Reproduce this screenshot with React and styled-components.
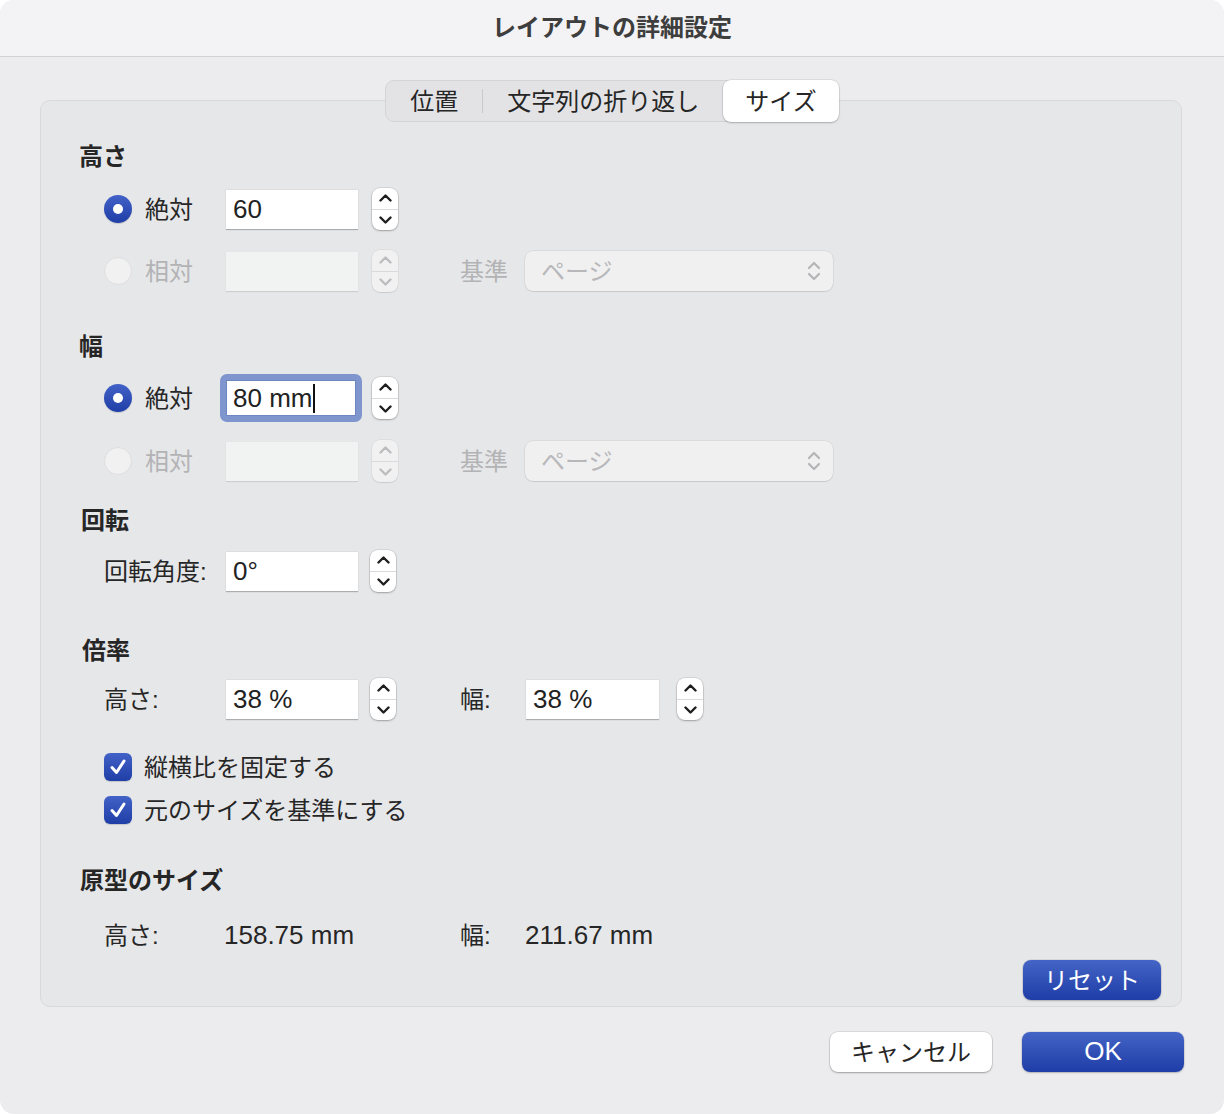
import styled, { createGlobalStyle } from 'styled-components'

const GlobalStyle = createGlobalStyle`
  html, body { margin: 0; padding: 0; background: #fff; }
  body {
    font-family: "Liberation Sans", "Noto Sans CJK JP", sans-serif;
    color: #262626;
    -webkit-font-smoothing: antialiased;
  }
`

const Window = styled.div`
  width: 1224px;
  height: 1114px;
  box-sizing: border-box;
  border-radius: 14px;
  overflow: hidden;
  background: #ececee;
  display: flex;
  flex-direction: column;
`

const TitleBar = styled.div`
  height: 57px;
  flex: none;
  box-sizing: border-box;
  padding-bottom: 6px;
  background: #f3f3f5;
  border-bottom: 1px solid #d2d2d5;
  display: flex;
  align-items: center;
  justify-content: center;
  font-size: 24px;
  font-weight: 700;
  color: #3e3e3e;
`

const Body = styled.div`
  display: flex;
  flex-direction: column;
  padding: 23px 40px 0 40px;
`

const Tabs = styled.div`
  align-self: center;
  position: relative;
  z-index: 1;
  display: flex;
  align-items: center;
  height: 42px;
  box-sizing: border-box;
  margin-bottom: -22px;
  background: #e3e3e5;
  border: 1px solid #d4d4d7;
  border-radius: 9px;
`

const Tab = styled.div`
  height: ${p => (p.$active ? '42px' : '40px')};
  margin-right: ${p => (p.$active ? '-1px' : '0')};
  box-sizing: border-box;
  display: flex;
  align-items: center;
  padding: 0 ${p => (p.$active ? 22 : 24)}px 4px;
  font-size: 24px;
  color: #262626;
  border-radius: 8px;
  background: ${p => (p.$active ? '#fff' : 'transparent')};
  box-shadow: ${p => (p.$active ? '0 0 0 0.5px rgba(0,0,0,0.12), 0 1px 2px rgba(0,0,0,0.22)' : 'none')};
`

const TabDivider = styled.span`
  width: 1px;
  height: 24px;
  background: #c9c9cc;
`

const Panel = styled.div`
  margin-right: 2px;
  background: #e6e7e9;
  border: 1px solid #d9d9dc;
  border-radius: 10px;
  display: flex;
  flex-direction: column;
  padding: 40px 20px 6px 38px;
`

const SectionTitle = styled.div`
  margin-top: ${p => p.$mt || 0}px;
  margin-left: ${p => p.$ml || 0}px;
  font-size: 24px;
  font-weight: 700;
  line-height: 32px;
  color: #262626;
`

const Row = styled.div`
  margin-top: ${p => p.$mt || 0}px;
  margin-left: 25px;
  height: 40px;
  display: flex;
  align-items: center;
`

const Choice = styled.label`
  width: ${p => p.$w || 122}px;
  flex: none;
  display: flex;
  align-items: center;
  gap: 13px;
  font-size: 24px;
  color: ${p => (p.$disabled ? '#b3b3b5' : '#262626')};
`

const ChoiceText = styled.span`
  padding-bottom: 4px;
`

const Label = styled.span`
  width: ${p => p.$w}px;
  margin-left: ${p => p.$ml || 0}px;
  padding-bottom: 4px;
  flex: none;
  font-size: 24px;
  color: ${p => (p.$disabled ? '#b3b3b5' : '#262626')};
`

const Value = styled.span`
  width: ${p => p.$w || 'auto'}px;
  flex: none;
  font-size: 26px;
  color: #262626;
`

const Radio = styled.span`
  width: 28px;
  height: 28px;
  flex: none;
  border-radius: 50%;
  box-sizing: border-box;
  position: relative;
  background: ${p => (p.$on ? 'linear-gradient(#4262c8, #1f3ea6)' : '#f1f1f2')};
  border: ${p => (p.$on ? 'none' : '1px solid #dedee0')};
  box-shadow: ${p => (p.$on ? '0 1px 1px rgba(0,0,0,0.15)' : 'none')};

  &::after {
    content: '';
    display: ${p => (p.$on ? 'block' : 'none')};
    position: absolute;
    left: 9px;
    top: 9px;
    width: 10px;
    height: 10px;
    border-radius: 50%;
    background: #fff;
  }
`

const Field = styled.div`
  width: ${p => p.$w || 132}px;
  height: 40px;
  flex: none;
  box-sizing: border-box;
  display: flex;
  align-items: center;
  padding-left: 7px;
  font-size: 26px;
  color: #222;
  background: ${p => (p.$disabled ? '#f1f2f2' : '#fff')};
  border-top: 1px solid ${p => (p.$disabled ? '#e6e6e6' : '#dedede')};
  box-shadow: 0 1px 1px ${p => (p.$disabled ? 'rgba(0,0,0,0.10)' : 'rgba(0,0,0,0.25)')};
`

const FocusRing = styled.div`
  width: 142px;
  height: 48px;
  flex: none;
  box-sizing: border-box;
  padding: 6px;
  border-radius: 7px;
  background: #7e95cd;
`

const FocusedField = styled.div`
  height: 36px;
  display: flex;
  align-items: center;
  padding-left: 7px;
  background: #fff;
  font-size: 26px;
  color: #222;
  box-shadow: inset 0 0 0 1px #6d85c0;
`

const Caret = styled.span`
  display: inline-block;
  width: 2px;
  height: 29px;
  margin-left: 1px;
  background: #111;
`

const StepperBox = styled.div`
  margin-left: ${p => p.$ml || 14}px;
  width: 26px;
  height: 42px;
  flex: none;
  box-sizing: border-box;
  border-radius: 8px;
  display: flex;
  flex-direction: column;
  background: ${p => (p.$disabled ? '#f1f1f2' : '#fff')};
  box-shadow: ${p => (p.$disabled
    ? '0 0 0 0.5px rgba(0,0,0,0.08), 0 1px 1px rgba(0,0,0,0.08)'
    : '0 0 0 0.5px rgba(0,0,0,0.15), 0 1px 2px rgba(0,0,0,0.25)')};
  color: ${p => (p.$disabled ? '#bdbdbf' : '#1e1e1e')};
`

const StepHalf = styled.div`
  flex: 1;
  display: flex;
  align-items: center;
  justify-content: center;
  border-top: ${p => (p.$bottom ? '1px solid #dadadc' : 'none')};
`

const Chevron = ({ up }) => (
  <svg width="13" height="8" viewBox="0 0 13 8">
    <polyline
      points={up ? '1.5,6.5 6.5,1.5 11.5,6.5' : '1.5,1.5 6.5,6.5 11.5,1.5'}
      fill="none"
      stroke="currentColor"
      strokeWidth="2.4"
      strokeLinecap="round"
      strokeLinejoin="round"
    />
  </svg>
)

const Stepper = ({ disabled, ml }) => (
  <StepperBox $disabled={disabled} $ml={ml}>
    <StepHalf><Chevron up /></StepHalf>
    <StepHalf $bottom><Chevron /></StepHalf>
  </StepperBox>
)

const Select = styled.div`
  width: 308px;
  height: 40px;
  flex: none;
  box-sizing: border-box;
  border-radius: 8px;
  display: flex;
  align-items: center;
  justify-content: space-between;
  padding: 0 12px 0 16px;
  background: #f0f0f1;
  box-shadow: 0 0 0 0.5px rgba(0,0,0,0.10), 0 1px 1px rgba(0,0,0,0.08);
  font-size: 24px;
  color: #b8b8ba;
`

const SelectText = styled.span`
  padding-bottom: 4px;
`

const UpDown = () => (
  <svg width="14" height="22" viewBox="0 0 14 22">
    <polyline points="2,8 7,3 12,8" fill="none" stroke="#b5b5b7" strokeWidth="2.2" strokeLinecap="round" strokeLinejoin="round" />
    <polyline points="2,14 7,19 12,14" fill="none" stroke="#b5b5b7" strokeWidth="2.2" strokeLinecap="round" strokeLinejoin="round" />
  </svg>
)

const CheckRow = styled.label`
  margin-top: ${p => p.$mt || 0}px;
  margin-left: 25px;
  height: 32px;
  display: flex;
  align-items: center;
  gap: 12px;
  font-size: 24px;
  color: #262626;
`

const CheckBox = styled.span`
  width: 28px;
  height: 28px;
  flex: none;
  border-radius: 6px;
  display: flex;
  align-items: center;
  justify-content: center;
  background: linear-gradient(#4262c8, #1f3ea6);
  box-shadow: 0 1px 1px rgba(0,0,0,0.15);
`

const Check = () => (
  <svg width="18" height="18" viewBox="0 0 18 18">
    <polyline points="3,9.5 7.5,14.5 15,3" fill="none" stroke="#fff" strokeWidth="3" strokeLinecap="round" strokeLinejoin="round" />
  </svg>
)

const Button = styled.button`
  width: ${p => p.$w || 162}px;
  height: 40px;
  box-sizing: border-box;
  border: none;
  border-radius: 8px;
  font-family: inherit;
  font-size: ${p => p.$size || 24}px;
  padding: 0 0 ${p => (p.$latin ? 1 : 4)}px;
  color: ${p => (p.$primary ? '#fff' : '#262626')};
  background: ${p => (p.$primary ? 'linear-gradient(#4464c6, #1e3da7)' : '#fff')};
  box-shadow: ${p => (p.$primary
    ? '0 0 0 0.5px rgba(0,0,0,0.12), 0 1px 2px rgba(0,0,0,0.2)'
    : '0 0 0 0.5px rgba(0,0,0,0.14), 0 1px 2px rgba(0,0,0,0.28)')};
`

const PanelFooter = styled.div`
  margin-top: 5px;
  display: flex;
  justify-content: flex-end;
`

const Footer = styled.div`
  margin-top: 25px;
  display: flex;
  justify-content: flex-end;
  gap: 30px;
`

const SizeRows = ({ focused, value }) => (
  <>
    <Row $mt={focused ? 15 : 16}>
      <Choice $w={focused ? 116 : 122}><Radio $on /><ChoiceText>絶対</ChoiceText></Choice>
      {focused ? (
        <FocusRing>
          <FocusedField>{value}<Caret /></FocusedField>
        </FocusRing>
      ) : (
        <Field>{value}</Field>
      )}
      <Stepper ml={focused ? 10 : 14} />
    </Row>
    <Row $mt={focused ? 23 : 22}>
      <Choice $disabled><Radio /><ChoiceText>相対</ChoiceText></Choice>
      <Field $disabled />
      <Stepper disabled />
      <Label $w={65} $ml={62} $disabled>基準</Label>
      <Select><SelectText>ページ</SelectText><UpDown /></Select>
    </Row>
  </>
)

export default function App() {
  return (
    <>
      <GlobalStyle />
      <Window>
        <TitleBar>レイアウトの詳細設定</TitleBar>
        <Body>
          <Tabs>
            <Tab>位置</Tab>
            <TabDivider />
            <Tab>文字列の折り返し</Tab>
            <Tab $active>サイズ</Tab>
          </Tabs>
          <Panel>
            <SectionTitle>高さ</SectionTitle>
            <SizeRows value="60" />

            <SectionTitle $mt={40}>幅</SectionTitle>
            <SizeRows focused value="80 mm" />

            <SectionTitle $mt={24} $ml={2}>回転</SectionTitle>
            <Row $mt={14}>
              <Label $w={122}>回転角度:</Label>
              <Field>0°</Field>
              <Stepper ml={12} />
            </Row>

            <SectionTitle $mt={44} $ml={3}>倍率</SectionTitle>
            <Row $mt={12}>
              <Label $w={122}>高さ:</Label>
              <Field>38 %</Field>
              <Stepper ml={12} />
              <Label $w={66} $ml={64}>幅:</Label>
              <Field $w={133}>38 %</Field>
              <Stepper ml={18} />
            </Row>

            <CheckRow $mt={32}><CheckBox><Check /></CheckBox><ChoiceText>縦横比を固定する</ChoiceText></CheckRow>
            <CheckRow $mt={11}><CheckBox><Check /></CheckBox><ChoiceText>元のサイズを基準にする</ChoiceText></CheckRow>

            <SectionTitle $mt={39} $ml={1}>原型のサイズ</SectionTitle>
            <Row $mt={18}>
              <Label $w={120}>高さ:</Label>
              <Value $w={236}>158.75 mm</Value>
              <Label $w={65}>幅:</Label>
              <Value>211.67 mm</Value>
            </Row>

            <PanelFooter>
              <Button $primary $w={138}>リセット</Button>
            </PanelFooter>
          </Panel>
          <Footer>
            <Button>キャンセル</Button>
            <Button $primary $latin $size={26}>OK</Button>
          </Footer>
        </Body>
      </Window>
    </>
  )
}
